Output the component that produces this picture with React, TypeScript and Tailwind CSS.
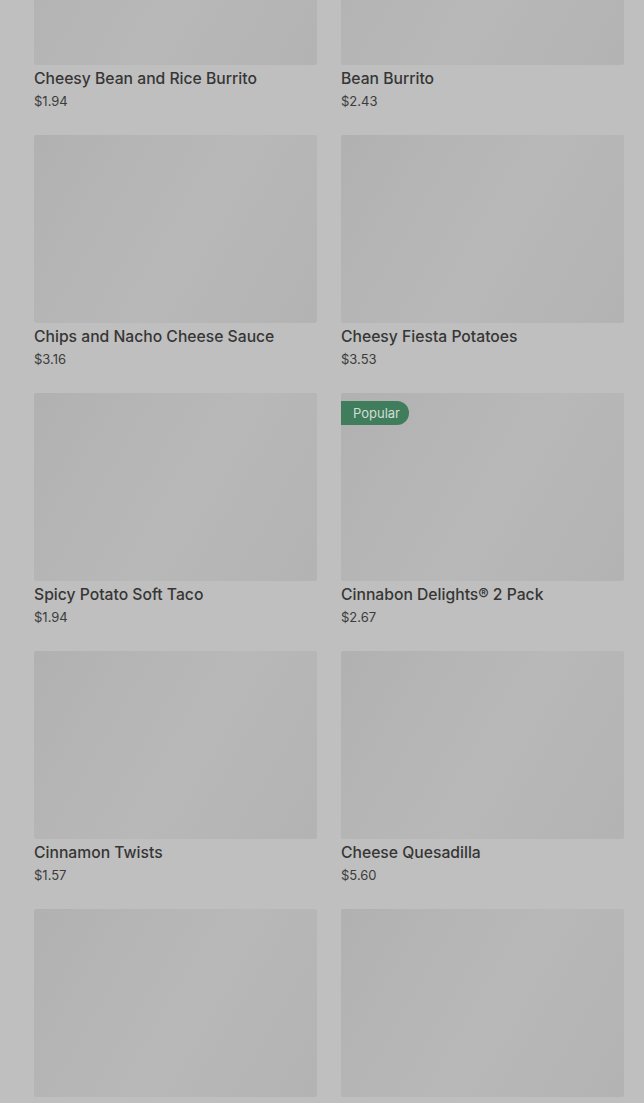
import React from "react";

type Item = { name: string; price: string; badge?: string };

const items: Item[] = [
  { name: "Cheesy Bean and Rice Burrito", price: "$1.94" },
  { name: "Bean Burrito", price: "$2.43" },
  { name: "Chips and Nacho Cheese Sauce", price: "$3.16" },
  { name: "Cheesy Fiesta Potatoes", price: "$3.53" },
  { name: "Spicy Potato Soft Taco", price: "$1.94" },
  { name: "Cinnabon Delights® 2 Pack", price: "$2.67", badge: "Popular" },
  { name: "Cinnamon Twists", price: "$1.57" },
  { name: "Cheese Quesadilla", price: "$5.60" },
  { name: "Beefy 5-Layer Burrito", price: "$4.19" },
  { name: "Black Beans and Rice", price: "$2.79" },
];

function Card({ item }: { item: Item }) {
  return (
    <div className="flex flex-col">
      <div className="relative h-[188px] rounded-[2px] bg-[linear-gradient(120deg,#b1b1b1_0%,#b6b6b6_35%,#b8b8b8_55%,#b3b3b3_100%)]">
        {item.badge && (
          <span className="absolute left-0 top-[8px] flex h-[24px] items-center rounded-r-full bg-[#3f7d5c] pl-[12px] pr-[9px] text-[13px] leading-none text-[#d3ddd6]">
            {item.badge}
          </span>
        )}
      </div>
      <div className="mt-[3px] text-[15.7px] font-medium leading-[22px] text-[#363636]">
        {item.name}
      </div>
      <div className="mt-[1px] text-[13px] leading-[20px] text-[#3c3c3c]">{item.price}</div>
    </div>
  );
}

export default function App() {
  return (
    <div
      className="min-h-[1103px] w-full overflow-hidden bg-[#bfbfbf]"
      style={{ fontFamily: "Inter, 'Noto Sans', sans-serif" }}
    >
      <div className="mt-[-123px] grid grid-cols-2 gap-x-[24px] gap-y-[24px] pl-[34px] pr-[20px]">
        {items.map((it, i) => (
          <Card key={i} item={it} />
        ))}
      </div>
    </div>
  );
}
